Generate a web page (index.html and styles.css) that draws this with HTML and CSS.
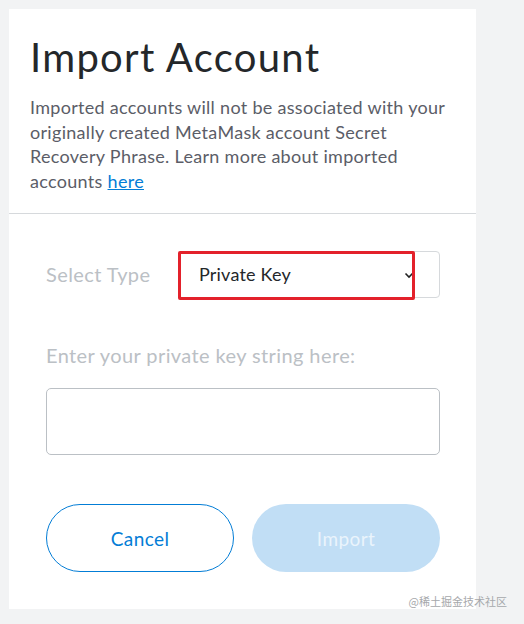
FILE: index.html
```html
<!DOCTYPE html>
<html>
<head>
<meta charset="utf-8">
<link rel="stylesheet" href="styles.css">
</head>
<body>
<div class="card">
  <div class="header">
    <h1 class="title">Import Account</h1>
    <p class="desc">Imported accounts will not be associated with your originally created MetaMask account Secret Recovery Phrase. Learn more about imported accounts <a class="link" href="#">here</a></p>
  </div>
  <div class="body">
    <div class="type-row">
      <span class="label">Select Type</span>
      <div class="select">
        <span class="select-text">Private Key</span>
        <svg class="chev" width="10" height="8" viewBox="0 0 10 8"><path d="M1.5 2.5 L5 6 L8.5 2.5" fill="none" stroke="#222" stroke-width="1.6"/></svg>
        <div class="highlight"></div>
      </div>
    </div>
    <div class="label key-label">Enter your private key string here:</div>
    <div class="textarea"></div>
    <div class="buttons">
      <button class="btn cancel">Cancel</button>
      <button class="btn import">Import</button>
    </div>
  </div>
</div>
<div class="watermark">@稀土掘金技术社区</div>
</body>
</html>
```
FILE: styles.css
```css
html, body { margin: 0; padding: 0; }
body {
  width: 524px;
  height: 624px;
  background: #f2f3f4;
  font-family: "Lato", "Noto Sans", sans-serif;
  position: relative;
  overflow: hidden;
}
.card {
  position: absolute;
  left: 9px;
  top: 9px;
  width: 467px;
  height: 600px;
  background: #fff;
}
.header {
  padding: 24px 21px 20px 21px;
  border-bottom: 1px solid #d6d9dc;
  height: 160px;
}
.title {
  margin: 0;
  font-weight: 400;
  font-size: 40px;
  line-height: 48px;
  color: #24272a;
  letter-spacing: 1.3px;
}
.desc {
  margin: 14px 0 0 0;
  font-size: 18px;
  line-height: 24.5px;
  color: #5b5d67;
  letter-spacing: 0.3px;
}
.link { color: #037dd6; }
.body {
  padding: 36px 36px 0 37px;
}
.type-row {
  display: flex;
  align-items: center;
  height: 48px;
}
.label {
  color: #bbc0c5;
  font-size: 20px;
  letter-spacing: 0.4px;
}
.type-row .label { width: 132px; }
.select {
  position: relative;
  width: 262px;
  height: 47px;
  border: 1px solid #d6d9dc;
  border-radius: 4px;
  display: flex;
  align-items: center;
  box-sizing: border-box;
}
.select-text {
  font-size: 18px;
  color: #24272a;
  margin-left: 20px;
  letter-spacing: 0.2px;
}
.chev {
  position: absolute;
  left: 225px;
  top: 19px;
}
.highlight {
  position: absolute;
  left: -1px;
  top: -1px;
  width: 237px;
  height: 49px;
  border: 3px solid #e3212b;
  border-radius: 2px;
  box-sizing: border-box;
}
.key-label {
  margin-top: 45px;
  line-height: 24px;
}
.textarea {
  margin-top: 21px;
  width: 394px;
  height: 67px;
  box-sizing: border-box;
  border: 1px solid #bbc0c5;
  border-radius: 5px;
}
.buttons {
  display: flex;
  gap: 18px;
  margin-top: 49px;
}
.btn {
  width: 188px;
  height: 68px;
  border-radius: 34px;
  font-family: inherit;
  font-size: 19px;
  letter-spacing: 0.4px;
  box-sizing: border-box;
}
.cancel {
  background: #fff;
  border: 1px solid #037dd6;
  color: #037dd6;
}
.import {
  background: #c1def5;
  border: none;
  color: #eaf4fc;
}
.watermark {
  position: absolute;
  right: 17px;
  top: 593px;
  font-family: "Noto Sans CJK SC", sans-serif;
  font-size: 11px;
  color: #a6a8ab;
}
```
